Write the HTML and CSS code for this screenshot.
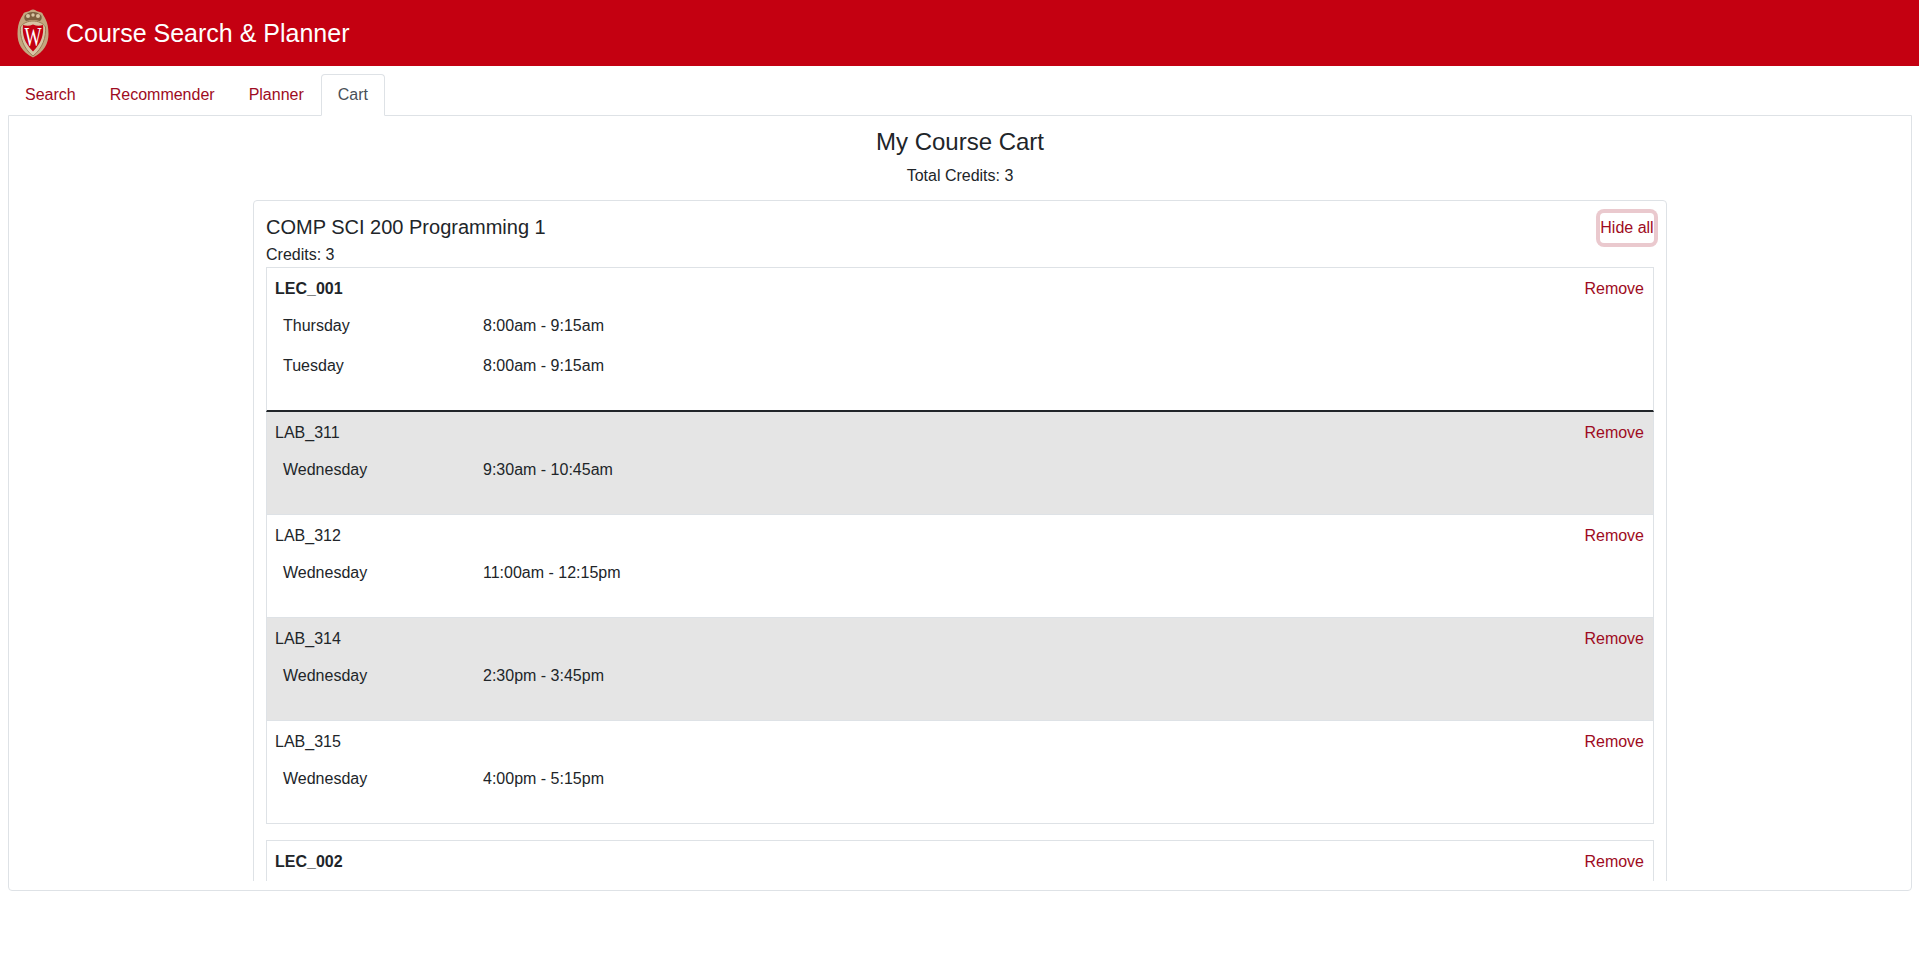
FILE: index.html
```html
<!DOCTYPE html>
<html lang="en">
<head>
  <meta charset="UTF-8">
  <meta name="viewport" content="width=device-width, initial-scale=1.0">
  <title>Course Search &amp; Planner</title>
  <link rel="stylesheet" href="styles.css">
</head>
<body>
  <header class="topbar">
    <svg class="crest" viewBox="0 0 32 49" width="32" height="49" role="img" aria-label="UW crest">
      <path d="M16 .5c2 0 3 1.500 5 2 3 .7 4.500 1 5 3 .3 1.200 1.500 2 2.500 4.500C30.600 14 31.500 19 31.500 25c0 9-4 18-15.500 23.500C4.500 43 .5 34 .5 25c0-6 .9-11 3-15C4.500 7.500 5.700 6.700 6 5.500c.5-2 2-2.300 5-3 2-.5 3-2 5-2z" fill="#c4a67f"/>
      <path d="M16 3c-3 0-7 1.500-8.500 4C7 9 7.500 11 9 12c4-1.500 10-1.500 14 0 1.500-1 2-3 1.500-5C23 4.500 19 3 16 3z" fill="#7d5f40"/>
      <circle cx="11" cy="7" r="2" fill="#d9c6a5"/>
      <circle cx="21" cy="7" r="2" fill="#d9c6a5"/>
      <circle cx="16" cy="6" r="1.700" fill="#d9c6a5"/>
      <path d="M16 12C11 12 6 14 3.500 18 2.800 28 6 39 16 47c10-8 13.200-19 12.500-29C26 14 21 12 16 12z" fill="#d8c4a3" stroke="#9a7c55" stroke-width="1"/>
      <path d="M6 16c3.500 1 6.500 1 10-.5 3.500 1.500 6.500 1.500 10 .5 1 9.500-1.500 18-10 26.500C7.500 34 5 25.500 6 16z" fill="#c40011"/>
      <text class="crest-letter" x="16" y="37" text-anchor="middle" textLength="17" lengthAdjust="spacingAndGlyphs">W</text>
    </svg>
    <span class="brand">Course Search &amp; Planner</span>
  </header>

  <nav class="tabs">
    <a class="tab" href="#">Search</a>
    <a class="tab" href="#">Recommender</a>
    <a class="tab" href="#">Planner</a>
    <a class="tab tab-active" href="#">Cart</a>
  </nav>

  <main class="tab-panel">
    <h2 class="cart-title">My Course Cart</h2>
    <p class="cart-total">Total Credits: 3</p>

    <div class="cart-scroll">
      <section class="course-card">
        <div class="course-head">
          <h3 class="course-name">COMP SCI 200 Programming 1</h3>
          <button class="hide-all" type="button">Hide all</button>
        </div>
        <div class="course-credits">Credits: 3</div>

        <div class="section-group">
          <div class="section-item section-lecture">
            <div class="section-head">
              <strong>LEC_001</strong>
              <a class="remove" href="#">Remove</a>
            </div>
            <div class="meet"><span class="meet-day">Thursday</span><span>8:00am - 9:15am</span></div>
            <div class="meet"><span class="meet-day">Tuesday</span><span>8:00am - 9:15am</span></div>
          </div>
          <div class="section-item section-shade">
            <div class="section-head">
              <span>LAB_311</span>
              <a class="remove" href="#">Remove</a>
            </div>
            <div class="meet"><span class="meet-day">Wednesday</span><span>9:30am - 10:45am</span></div>
          </div>
          <div class="section-item">
            <div class="section-head">
              <span>LAB_312</span>
              <a class="remove" href="#">Remove</a>
            </div>
            <div class="meet"><span class="meet-day">Wednesday</span><span>11:00am - 12:15pm</span></div>
          </div>
          <div class="section-item section-shade">
            <div class="section-head">
              <span>LAB_314</span>
              <a class="remove" href="#">Remove</a>
            </div>
            <div class="meet"><span class="meet-day">Wednesday</span><span>2:30pm - 3:45pm</span></div>
          </div>
          <div class="section-item">
            <div class="section-head">
              <span>LAB_315</span>
              <a class="remove" href="#">Remove</a>
            </div>
            <div class="meet"><span class="meet-day">Wednesday</span><span>4:00pm - 5:15pm</span></div>
          </div>
        </div>

        <div class="section-group">
          <div class="section-item section-lecture">
            <div class="section-head">
              <strong>LEC_002</strong>
              <a class="remove" href="#">Remove</a>
            </div>
          </div>
        </div>
      </section>
    </div>
  </main>
</body>
</html>
```

FILE: styles.css
```css
* {
  box-sizing: border-box;
}
body {
  margin: 0;
  font-family: "Liberation Sans", Arial, sans-serif;
  font-size: 16px;
  line-height: 24px;
  color: #212529;
  background: #fff;
}
.topbar {
  display: flex;
  align-items: center;
  gap: 17px;
  height: 66px;
  padding-left: 17px;
  background: #c40011;
  color: #fff;
}
.crest {
  flex: none;
}
.crest-letter {
  font-family: "Liberation Serif", serif;
  font-size: 27px;
  fill: #fff;
}
.brand {
  font-size: 25px;
  line-height: 29px;
}
.tabs {
  display: flex;
  margin: 8px 7px -1px 8px;
  position: relative;
}
.tab {
  padding: 8px 16px;
  border: 1px solid transparent;
  border-radius: 4px 4px 0 0;
  color: #9e0b22;
  text-decoration: none;
}
.tab-active {
  color: #495057;
  background: #fff;
  border-color: #dee2e6 #dee2e6 #fff;
}
.tab-panel {
  margin: 0 7px 0 8px;
  height: 776px;
  padding: 11px 0 9px;
  border: 1px solid #dee2e6;
  border-radius: 0 0 4px 4px;
  display: flex;
  flex-direction: column;
}
.cart-title {
  margin: 0 0 8px;
  font-size: 24px;
  line-height: 29px;
  font-weight: 400;
  text-align: center;
}
.cart-total {
  margin: 0 0 12px;
  text-align: center;
}
.cart-scroll {
  flex: 1;
  min-height: 0;
  overflow: hidden;
  padding: 0 244px;
}
.course-card {
  padding: 12px 12px 16px;
  border: 1px solid #dee2e6;
  border-radius: 4px;
}
.course-head {
  display: flex;
  align-items: center;
  justify-content: space-between;
  height: 30px;
}
.course-name {
  margin: 0;
  padding-bottom: 2px;
  font-size: 20px;
  line-height: 24px;
  font-weight: 400;
}
.hide-all {
  width: 54px;
  height: 30px;
  padding: 0;
  border: 0;
  border-radius: 4px;
  background: #fff;
  color: #9e0b22;
  font: inherit;
  white-space: nowrap;
  box-shadow: 0 0 0 4px rgba(158, 11, 34, 0.22);
}
.course-credits {
  height: 24px;
}
.section-group {
  margin-bottom: 16px;
}
.section-item {
  padding: 9px 9px 24px 8px;
  border: 1px solid #dee2e6;
  border-top: 0;
}
.section-group .section-item:first-child {
  border-top: 1px solid #dee2e6;
}
.section-lecture {
  border-bottom: 2px solid #212529;
}
.section-shade {
  background: #e5e5e5;
}
.section-head {
  display: flex;
  justify-content: space-between;
  margin-bottom: 5px;
}
.remove {
  color: #9e0b22;
  text-decoration: none;
}
.meet {
  display: flex;
  padding: 8px;
}
.meet-day {
  width: 200px;
  flex: none;
}
```
